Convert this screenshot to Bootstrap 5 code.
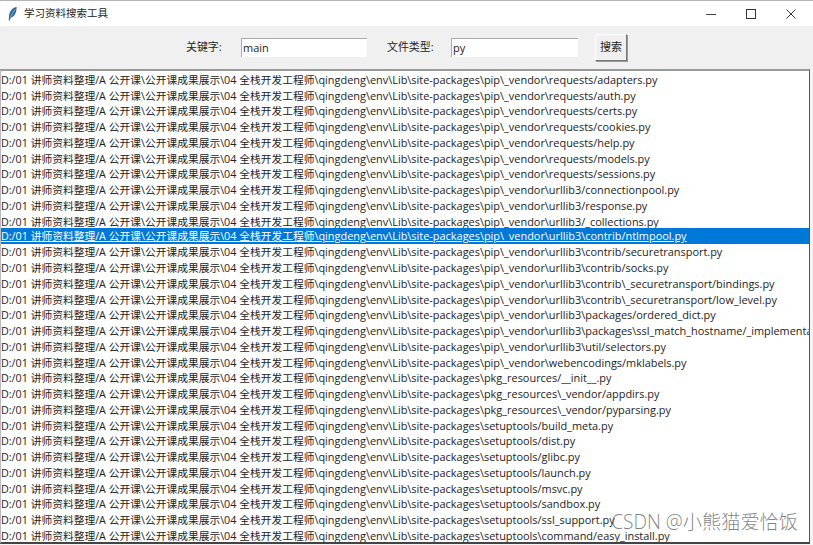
<!DOCTYPE html>
<html lang="zh">
<head>
    <meta charset="UTF-8">
    <meta name="viewport" content="width=device-width, initial-scale=1.0">
    <title>学习资料搜索工具</title>
    <link href="https://cdn.jsdelivr.net/npm/bootstrap@5.3.2/dist/css/bootstrap.min.css" rel="stylesheet">
    <style>
        html, body {
            height: 545px;
            overflow: hidden;
        }

        body {
            background-color: #f4f4f4;
            font-family: "Open Sans", "Noto Sans CJK SC", sans-serif;
            font-size: 10.93px;
            color: #222;
        }

        .win-frame {
            height: 545px;
            border-top: 1px solid #b5b5b5;
            padding-right: 3px;
            padding-bottom: 1px;
        }

        .title-bar {
            height: 25px;
            margin-right: -3px;
            background-color: #fff;
        }

        .title-text {
            margin-left: 7px;
            font-size: 10.5px;
        }

        .win-btn {
            width: 40px;
            height: 25px;
            display: flex;
            align-items: center;
            justify-content: center;
        }

        .tool-bar {
            height: 43px;
            background-color: #f0f0f0;
            margin-right: -3px;
        }

        .key-label {
            width: 55px;
        }

        .type-label {
            width: 64px;
            margin-left: 20px;
        }

        .key-input {
            width: 126px;
        }

        .type-input {
            width: 127px;
        }

        .field-input {
            height: 19px;
            border: 0;
            border-top: 1px solid #aaa;
            border-left: 1px solid #aaa;
            background: #fff;
            padding: 0 1px 2px;
            font-size: 11px;
            color: #222;
            border-radius: 0;
            outline: 0;
        }

        .search-btn {
            width: 32px;
            height: 27px;
            margin-left: 17px;
            padding: 0;
            font-size: 11px;
            color: #222;
            background: #f0f0f0;
            border: 1px solid;
            border-color: #fff #777 #777 #fff;
            border-radius: 0;
            box-shadow: 1px 1px 0 #999;
        }

        .result-box {
            border-top: 2px solid #9a9a9a;
            border-left: 1px solid #bbb;
            border-right: 1px solid #555;
            border-bottom: 2px solid #444;
            background-color: #fff;
            overflow: hidden;
            flex: 1;
            padding-top: .8px;
        }

        .result-box .list-group-item {
            border: 0;
            padding: 0;
            height: 15.78px;
            line-height: 15.78px;
            white-space: nowrap;
            background: transparent;
            color: #222;
        }

        .result-box .list-group-item.active {
            background-color: #0078d7;
            color: #fff;
            text-decoration: underline;
        }

        .path-head {
            font-size: 10.75px;
        }

        .water-mark {
            position: absolute;
            right: 15px;
            bottom: 8px;
            font-size: 19.2px;
            font-weight: 300;
            color: rgba(90, 90, 90, .75);
        }
    </style>
</head>
<body>
    <div class="win-frame d-flex flex-column position-relative">
        <!-- 标题栏 -->
        <div class="title-bar d-flex align-items-center">
            <svg class="ms-2" width="9" height="16" viewBox="0 0 9 16">
                <path d="M8.6 1C5 1.5 1.8 4.5 1 9.5L.8 14.5L1.9 14.5L2.6 11.8C6.5 11 8.8 6 8.6 1Z" fill="#2f6ca5"/>
                <path d="M7 3.5L2.2 11" stroke="#a9c2da" stroke-width=".7"/>
            </svg>
            <span class="title-text">学习资料搜索工具</span>
            <div class="ms-auto d-flex" style="margin-right:2px">
                <div class="win-btn">
                    <svg width="10" height="10" viewBox="0 0 10 10"><path d="M0 5.5H10" stroke="#444"/></svg>
                </div>
                <div class="win-btn">
                    <svg width="10" height="10" viewBox="0 0 10 10"><rect x=".5" y=".5" width="9" height="9" fill="none" stroke="#333"/></svg>
                </div>
                <div class="win-btn">
                    <svg width="10" height="10" viewBox="0 0 10 10"><path d="M.5 .5L9.5 9.5M9.5 .5L.5 9.5" stroke="#333"/></svg>
                </div>
            </div>
        </div>

        <!-- 搜索栏 -->
        <div class="tool-bar d-flex align-items-center justify-content-center">
            <label class="key-label">关键字:</label>
            <input class="field-input key-input" value="main">
            <label class="type-label">文件类型:</label>
            <input class="field-input type-input" value="py">
            <button type="button" class="search-btn">搜索</button>
        </div>

        <!-- 结果列表 -->
        <div class="result-box" id="result-box">
            <ul class="list-group list-group-flush rounded-0" id="result-list"></ul>
        </div>

        <div class="water-mark">CSDN @小熊猫爱恰饭</div>
    </div>

    <script src="https://cdn.jsdelivr.net/npm/bootstrap@5.3.2/dist/js/bootstrap.bundle.min.js"></script>
    <script>
        const prefix = 'D:/01 讲师资料整理/A 公开课\\公开课成果展示\\04 全栈开发工程师';
        const middle = '\\qingdeng\\env\\Lib\\site-packages\\';
        const files = [
            'pip\\_vendor\\requests/adapters.py',
            'pip\\_vendor\\requests/auth.py',
            'pip\\_vendor\\requests/certs.py',
            'pip\\_vendor\\requests/cookies.py',
            'pip\\_vendor\\requests/help.py',
            'pip\\_vendor\\requests/models.py',
            'pip\\_vendor\\requests/sessions.py',
            'pip\\_vendor\\urllib3/connectionpool.py',
            'pip\\_vendor\\urllib3/response.py',
            'pip\\_vendor\\urllib3/_collections.py',
            'pip\\_vendor\\urllib3\\contrib/ntlmpool.py',
            'pip\\_vendor\\urllib3\\contrib/securetransport.py',
            'pip\\_vendor\\urllib3\\contrib/socks.py',
            'pip\\_vendor\\urllib3\\contrib\\_securetransport/bindings.py',
            'pip\\_vendor\\urllib3\\contrib\\_securetransport/low_level.py',
            'pip\\_vendor\\urllib3\\packages/ordered_dict.py',
            'pip\\_vendor\\urllib3\\packages\\ssl_match_hostname/_implementation.py',
            'pip\\_vendor\\urllib3\\util/selectors.py',
            'pip\\_vendor\\webencodings/mklabels.py',
            'pkg_resources/__init__.py',
            'pkg_resources\\_vendor/appdirs.py',
            'pkg_resources\\_vendor/pyparsing.py',
            'setuptools/build_meta.py',
            'setuptools/dist.py',
            'setuptools/glibc.py',
            'setuptools/launch.py',
            'setuptools/msvc.py',
            'setuptools/sandbox.py',
            'setuptools/ssl_support.py',
            'setuptools\\command/easy_install.py'
        ];
        const list = document.getElementById('result-list');
        files.forEach(function(f, i) {
            const li = document.createElement('li');
            li.className = 'list-group-item' + (i === 10 ? ' active' : '');
            const head = document.createElement('span');
            head.className = 'path-head';
            head.textContent = prefix;
            li.appendChild(head);
            li.appendChild(document.createTextNode(middle + f));
            list.appendChild(li);
        });
    </script>
</body>
</html>
